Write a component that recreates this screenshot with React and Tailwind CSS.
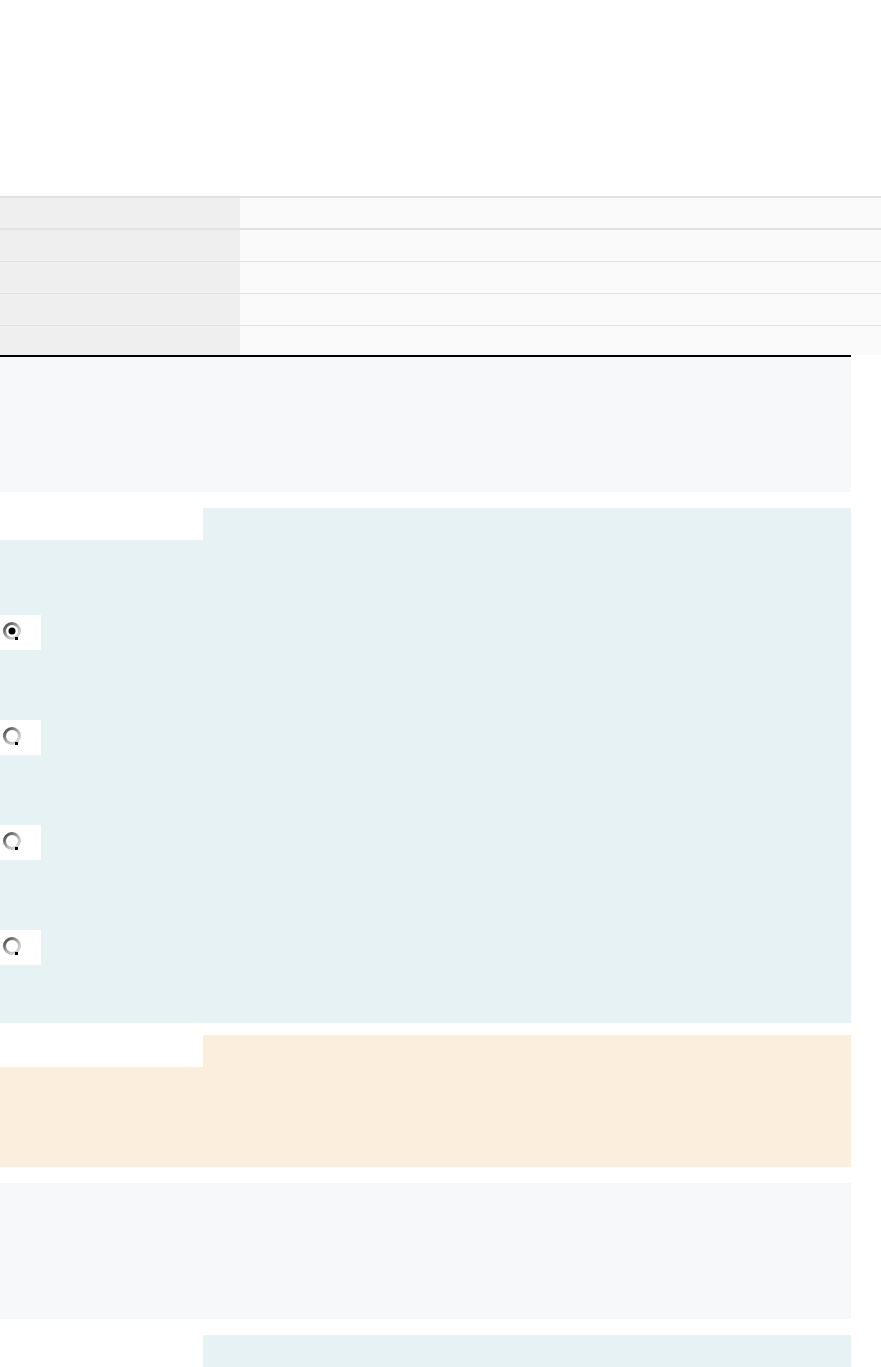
import React from "react";

const Radio = ({ checked }) => (
  <div className="w-[41px] h-[35px] bg-white flex items-start pt-[6px] pl-[2px]">
    <svg width="20" height="20" viewBox="0 0 20 20">
      <defs>
        <linearGradient id={checked ? "rg1" : "rg0"} x1="0" y1="0" x2="1" y2="1">
          <stop offset="0" stopColor="#3a3a3a" />
          <stop offset="0.55" stopColor="#b5b5b5" />
          <stop offset="1" stopColor="#e2e2e2" />
        </linearGradient>
      </defs>
      <circle cx="10" cy="10" r="7.5" fill="#fff" stroke={`url(#${checked ? "rg1" : "rg0"})`} strokeWidth="3" />
      {checked && <circle cx="10" cy="10" r="3.5" fill="#000" />}
      <rect x="13" y="16" width="3" height="3" fill="#000" />
    </svg>
  </div>
);

const TableRow = ({ h, border }) => (
  <div className={`flex ${border}`}>
    <div className={`w-[240px] bg-[#efefef] ${h}`} />
    <div className={`flex-1 bg-[#fafafa] ${h}`} />
  </div>
);

const Section = ({ color, children, bodyClass }) => (
  <div className="w-[851px] flex flex-col">
    <div className="flex">
      <div className="w-[203px] h-[32px] bg-white" />
      <div className={`flex-1 h-[32px] ${color}`} />
    </div>
    <div className={`${color} ${bodyClass}`}>{children}</div>
  </div>
);

export default function App() {
  return (
    <div className="w-full min-h-[1367px] bg-white font-['Liberation_Sans',sans-serif]">
      <div className="h-[196px]" />
      <div className="border-t-2 border-[#dee2e6]">
        <TableRow h="h-[30px]" border="border-b-2 border-[#dee2e6]" />
        <TableRow h="h-[31px]" border="border-b border-[#e0e0e0]" />
        <TableRow h="h-[31px]" border="border-b border-[#e0e0e0]" />
        <TableRow h="h-[31px]" border="border-b border-[#e0e0e0]" />
        <TableRow h="h-[29px]" border="" />
      </div>
      <div className="w-[851px] h-[2px] bg-black" />
      <div className="w-[851px] h-[135px] bg-[#f7f8fa]" />
      <div className="h-[16px]" />
      <Section color="bg-[#e6f2f4]" bodyClass="h-[483px] pt-[75px] flex flex-col gap-[70px]">
        <Radio checked />
        <Radio />
        <Radio />
        <Radio />
      </Section>
      <div className="h-[12px]" />
      <Section color="bg-[#fbeedd]" bodyClass="h-[100px]" />
      <div className="h-[16px]" />
      <div className="w-[851px] h-[136px] bg-[#f7f8fa]" />
      <div className="h-[16px]" />
      <Section color="bg-[#e6f2f4]" bodyClass="h-0" />
    </div>
  );
}
